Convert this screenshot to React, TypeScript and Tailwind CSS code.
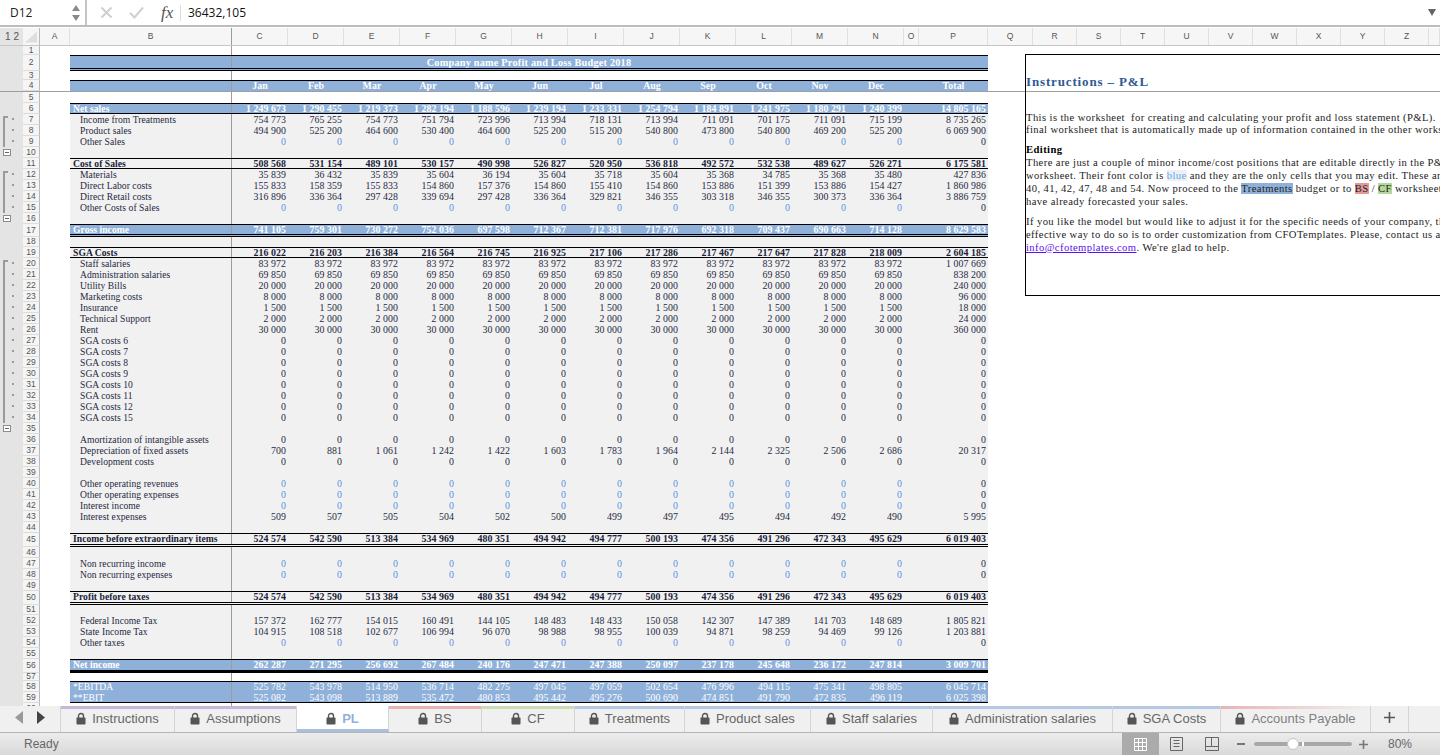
const rep = (v: string, total: string) => [...Array(12).fill(v), total];
const zeros = rep("0", "0");

type Kind = "white" | "grey" | "title" | "head" | "band" | "bandDouble" | "sub" | "subDouble" | "net" | "ebitdaTop" | "ebitdaBottom";

interface RowData {
  n: number;
  h?: string;
  kind: Kind;
  label?: string;
  vals?: string[];
  inputZero?: boolean;
  outline?: "start" | "mid" | "minus";
}

const fillStyles: Record<Kind, string> = {
  white: "bg-white",
  grey: "bg-[#f1f1f1] text-[#1f2942]",
  title: "bg-[#8fb1d9] border-t border-b-[3px] border-t-black border-b-black [border-bottom-style:double] text-white font-bold",
  head: "bg-[#8fb1d9] border-t border-black text-white font-bold",
  band: "bg-[#8fb1d9] border-y border-black text-white font-bold",
  bandDouble: "bg-[#8fb1d9] border-t border-b-[3px] border-t-black border-b-black [border-bottom-style:double] text-white font-bold",
  sub: "bg-[#f1f1f1] border-y border-black text-[#1a2338] font-bold",
  subDouble: "bg-[#f1f1f1] border-t border-b-[3px] border-t-black border-b-black [border-bottom-style:double] text-[#1a2338] font-bold",
  net: "bg-[#8fb1d9] border-t border-b-[3px] border-black text-white font-bold",
  ebitdaTop: "bg-[#8fb1d9] border-t border-black text-white",
  ebitdaBottom: "bg-[#8fb1d9] border-b border-black text-white",
};

const rows: RowData[] = [
  { n: 1, h: "h-[9px]", kind: "white" },
  { n: 2, h: "h-[16px]", kind: "title" },
  { n: 3, h: "h-[9px]", kind: "white" },
  { n: 4, h: "h-[12px]", kind: "head", vals: ["Jan", "Feb", "Mar", "Apr", "May", "Jun", "Jul", "Aug", "Sep", "Oct", "Nov", "Dec", "Total"] },
  { n: 5, kind: "white" },
  { n: 6, kind: "band", label: "Net sales", vals: ["1 249 673", "1 290 455", "1 219 373", "1 282 194", "1 188 596", "1 239 194", "1 233 331", "1 254 794", "1 184 891", "1 241 975", "1 180 291", "1 240 399", "14 805 165"] },
  { n: 7, kind: "grey", outline: "start", label: "Income from Treatments", vals: ["754 773", "765 255", "754 773", "751 794", "723 996", "713 994", "718 131", "713 994", "711 091", "701 175", "711 091", "715 199", "8 735 265"] },
  { n: 8, kind: "grey", outline: "mid", label: "Product sales", vals: ["494 900", "525 200", "464 600", "530 400", "464 600", "525 200", "515 200", "540 800", "473 800", "540 800", "469 200", "525 200", "6 069 900"] },
  { n: 9, kind: "grey", outline: "mid", label: "Other Sales", vals: zeros, inputZero: true },
  { n: 10, kind: "grey", outline: "minus" },
  { n: 11, kind: "sub", label: "Cost of Sales", vals: ["508 568", "531 154", "489 101", "530 157", "490 998", "526 827", "520 950", "536 818", "492 572", "532 538", "489 627", "526 271", "6 175 581"] },
  { n: 12, kind: "grey", outline: "start", label: "Materials", vals: ["35 839", "36 432", "35 839", "35 604", "36 194", "35 604", "35 718", "35 604", "35 368", "34 785", "35 368", "35 480", "427 836"] },
  { n: 13, kind: "grey", outline: "mid", label: "Direct Labor costs", vals: ["155 833", "158 359", "155 833", "154 860", "157 376", "154 860", "155 410", "154 860", "153 886", "151 399", "153 886", "154 427", "1 860 986"] },
  { n: 14, kind: "grey", outline: "mid", label: "Direct Retail costs", vals: ["316 896", "336 364", "297 428", "339 694", "297 428", "336 364", "329 821", "346 355", "303 318", "346 355", "300 373", "336 364", "3 886 759"] },
  { n: 15, kind: "grey", outline: "mid", label: "Other Costs of Sales", vals: zeros, inputZero: true },
  { n: 16, kind: "grey", outline: "minus" },
  { n: 17, h: "h-[13px]", kind: "bandDouble", label: "Gross income", vals: ["741 105", "759 301", "730 272", "752 036", "697 598", "712 367", "712 381", "717 976", "692 318", "709 437", "690 663", "714 128", "8 629 583"] },
  { n: 18, h: "h-[10px]", kind: "grey" },
  { n: 19, kind: "sub", label: "SGA Costs", vals: ["216 022", "216 203", "216 384", "216 564", "216 745", "216 925", "217 106", "217 286", "217 467", "217 647", "217 828", "218 009", "2 604 185"] },
  { n: 20, kind: "grey", outline: "start", label: "Staff salaries", vals: rep("83 972", "1 007 669") },
  { n: 21, kind: "grey", outline: "mid", label: "Administration salaries", vals: rep("69 850", "838 200") },
  { n: 22, kind: "grey", outline: "mid", label: "Utility Bills", vals: rep("20 000", "240 000") },
  { n: 23, kind: "grey", outline: "mid", label: "Marketing costs", vals: rep("8 000", "96 000") },
  { n: 24, kind: "grey", outline: "mid", label: "Insurance", vals: rep("1 500", "18 000") },
  { n: 25, kind: "grey", outline: "mid", label: "Technical Support", vals: rep("2 000", "24 000") },
  { n: 26, kind: "grey", outline: "mid", label: "Rent", vals: rep("30 000", "360 000") },
  { n: 27, kind: "grey", outline: "mid", label: "SGA costs 6", vals: zeros },
  { n: 28, kind: "grey", outline: "mid", label: "SGA costs 7", vals: zeros },
  { n: 29, kind: "grey", outline: "mid", label: "SGA costs 8", vals: zeros },
  { n: 30, kind: "grey", outline: "mid", label: "SGA costs 9", vals: zeros },
  { n: 31, kind: "grey", outline: "mid", label: "SGA costs 10", vals: zeros },
  { n: 32, kind: "grey", outline: "mid", label: "SGA costs 11", vals: zeros },
  { n: 33, kind: "grey", outline: "mid", label: "SGA costs 12", vals: zeros },
  { n: 34, kind: "grey", outline: "mid", label: "SGA costs 15", vals: zeros },
  { n: 35, kind: "grey", outline: "minus" },
  { n: 36, kind: "grey", label: "Amortization of intangible assets", vals: zeros },
  { n: 37, kind: "grey", label: "Depreciation of fixed assets", vals: ["700", "881", "1 061", "1 242", "1 422", "1 603", "1 783", "1 964", "2 144", "2 325", "2 506", "2 686", "20 317"] },
  { n: 38, kind: "grey", label: "Development costs", vals: zeros },
  { n: 39, kind: "grey" },
  { n: 40, kind: "grey", label: "Other operating revenues", vals: zeros, inputZero: true },
  { n: 41, kind: "grey", label: "Other operating expenses", vals: zeros, inputZero: true },
  { n: 42, kind: "grey", label: "Interest income", vals: zeros, inputZero: true },
  { n: 43, kind: "grey", label: "Interest expenses", vals: ["509", "507", "505", "504", "502", "500", "499", "497", "495", "494", "492", "490", "5 995"] },
  { n: 44, kind: "grey" },
  { n: 45, h: "h-[14px]", kind: "subDouble", label: "Income before extraordinary items", vals: ["524 574", "542 590", "513 384", "534 969", "480 351", "494 942", "494 777", "500 193", "474 356", "491 296", "472 343", "495 629", "6 019 403"] },
  { n: 46, kind: "grey" },
  { n: 47, kind: "grey", label: "Non recurring income", vals: zeros, inputZero: true },
  { n: 48, kind: "grey", label: "Non recurring expenses", vals: zeros, inputZero: true },
  { n: 49, kind: "grey" },
  { n: 50, h: "h-[14px]", kind: "subDouble", label: "Profit before taxes", vals: ["524 574", "542 590", "513 384", "534 969", "480 351", "494 942", "494 777", "500 193", "474 356", "491 296", "472 343", "495 629", "6 019 403"] },
  { n: 51, h: "h-[10px]", kind: "grey" },
  { n: 52, kind: "grey", label: "Federal Income Tax", vals: ["157 372", "162 777", "154 015", "160 491", "144 105", "148 483", "148 433", "150 058", "142 307", "147 389", "141 703", "148 689", "1 805 821"] },
  { n: 53, kind: "grey", label: "State Income Tax", vals: ["104 915", "108 518", "102 677", "106 994", "96 070", "98 988", "98 955", "100 039", "94 871", "98 259", "94 469", "99 126", "1 203 881"] },
  { n: 54, kind: "grey", label: "Other taxes", vals: zeros, inputZero: true },
  { n: 55, kind: "grey" },
  { n: 56, h: "h-[14px]", kind: "net", label: "Net income", vals: ["262 287", "271 295", "256 692", "267 484", "240 176", "247 471", "247 388", "250 097", "237 178", "245 648", "236 172", "247 814", "3 009 701"] },
  { n: 57, h: "h-[8px]", kind: "white" },
  { n: 58, kind: "ebitdaTop", label: "*EBITDA", vals: ["525 782", "543 978", "514 950", "536 714", "482 275", "497 045", "497 059", "502 654", "476 996", "494 115", "475 341", "498 805", "6 045 714"] },
  { n: 59, kind: "ebitdaBottom", label: "**EBIT", vals: ["525 082", "543 098", "513 889", "535 472", "480 853", "495 442", "495 276", "500 690", "474 851", "491 790", "472 835", "496 119", "6 025 398"] },
  { n: 60, kind: "white" },
];

const sheetFont = "font-['Liberation_Serif',serif] text-[9.9px] leading-[10px] tracking-[0.05px]";

function Outline({ type }: { type?: RowData["outline"] }) {
  return (
    <div className="w-[23px] shrink-0 bg-[#e4e4e4] flex items-stretch">
      {type === "minus" ? (
        <div className="ml-[3px] mt-[2px] w-[8px] h-[7px] border border-[#8c8c8c] bg-white flex items-center justify-center">
          <div className="w-[4px] h-px bg-[#666]" />
        </div>
      ) : type ? (
        <>
          <div className={"ml-[3px] w-[5px] border-l-2 border-[#9a9a9a] " + (type === "start" ? "border-t-2 mt-[2px]" : "")} />
          <div className="ml-[4px] mt-[4px] w-[2px] h-[2px] bg-[#9a9a9a]" />
        </>
      ) : null}
    </div>
  );
}

function SheetRow({ row }: { row: RowData }) {
  const indent = row.kind === "grey" ? "pl-[10px]" : "pl-[3px]";
  const isHead = row.kind === "head";
  // rows without a top border sit 1px lower so every baseline lands at the same spot
  const pad = row.kind === "grey" || row.kind === "ebitdaBottom" ? "pt-px " : "";
  return (
    <div className={"flex " + (row.h || "h-[11px]") + (isHead ? " border-b border-[#9e9e9e]" : "")}>
      <Outline type={row.outline} />
      <div className="w-[17px] shrink-0 bg-[#f5f5f5] border-r border-b border-r-[#b9b9b9] border-b-[#dcdcdc] flex items-center justify-center font-['Liberation_Sans',sans-serif] text-[8.5px] text-[#555]">
        {row.n}
      </div>
      <div className="w-[30px] shrink-0" />
      <div className={"w-[918px] shrink-0 flex " + fillStyles[row.kind] + " " + sheetFont}>
        <div className={"w-[162px] shrink-0 whitespace-nowrap text-[9.6px] border-r border-[#9c9c9c] " + pad + indent}>{row.label}</div>
        {row.kind === "title" ? (
          <div className="flex-1 pt-px pr-[162px] text-center text-[10.3px] leading-[12px] tracking-[0.2px]">Company name Profit and Loss Budget 2018</div>
        ) : (
          <>
            {(row.vals || []).slice(0, 12).map((v, i) => (
              <div
                key={i}
                className={"w-[56px] shrink-0 whitespace-nowrap " + pad + (isHead ? "text-center " : "text-right pr-[2px] ") + (row.inputZero ? "text-[#5a92e0]" : "")}
              >
                {v}
              </div>
            ))}
            {row.vals && <div className="w-[15px] shrink-0" />}
            {row.vals && (
              <div className={"w-[69px] shrink-0 whitespace-nowrap " + pad + (isHead ? "text-center" : "text-right pr-[2px]")}>{row.vals[12]}</div>
            )}
          </>
        )}
      </div>
    </div>
  );
}

function FormulaBar() {
  return (
    <div className="h-[28px] shrink-0 bg-white">
      <div className="h-[25px] flex items-center">
        <div className="w-[70px] pl-[10px] font-['Open_Sans',sans-serif] text-[12px] text-[#222]">D12</div>
        <svg width="10" height="18" viewBox="0 0 10 18" className="ml-[1px]">
          <path d="M5 1 L9 7 H1 Z" fill="#8a8a8a" />
          <path d="M5 17 L9 11 H1 Z" fill="#8a8a8a" />
        </svg>
        <div className="ml-[4px] h-[25px] w-[2px] bg-[#c4c4c4]" />
        <svg width="13" height="13" viewBox="0 0 13 13" className="ml-[13px]">
          <path d="M1.5 1.5 L11.5 11.5 M11.5 1.5 L1.5 11.5" stroke="#cfcfcf" strokeWidth="2" />
        </svg>
        <svg width="15" height="13" viewBox="0 0 15 13" className="ml-[16px]">
          <path d="M1 7 L5.5 11.5 L14 1.5" stroke="#cfcfcf" strokeWidth="2" fill="none" />
        </svg>
        <span className="ml-[17px] w-[19px] font-['Liberation_Serif',serif] italic text-[17px] text-[#555]">fx</span>
        <div className="h-[16px] w-px bg-[#ddd]" />
        <span className="ml-[7px] font-['Open_Sans',sans-serif] text-[12px] text-[#111]">36432,105</span>
        <svg width="8" height="7" viewBox="0 0 8 7" className="ml-auto mr-[4px]">
          <path d="M0 0 H8 L4 7 Z" fill="#666" />
        </svg>
      </div>
      <div className="h-[2px] bg-[#bdbdbd]" />
    </div>
  );
}

const colHeads: [string, string][] = [
  ["A", "w-[30px]"], ["B", "w-[162px]"], ["C", "w-[56px]"], ["D", "w-[56px]"], ["E", "w-[56px]"], ["F", "w-[56px]"],
  ["G", "w-[56px]"], ["H", "w-[56px]"], ["I", "w-[56px]"], ["J", "w-[56px]"], ["K", "w-[56px]"], ["L", "w-[56px]"],
  ["M", "w-[56px]"], ["N", "w-[56px]"], ["O", "w-[15px]"], ["P", "w-[69px]"], ["Q", "w-[45px]"], ["R", "w-[44px]"],
  ["S", "w-[44px]"], ["T", "w-[44px]"], ["U", "w-[44px]"], ["V", "w-[44px]"], ["W", "w-[44px]"], ["X", "w-[44px]"],
  ["Y", "w-[44px]"], ["Z", "w-[44px]"], ["", "w-[11px]"],
];

function ColumnHeader() {
  return (
    <div className="h-[18px] shrink-0 flex bg-[#f6f6f6] border-b border-[#c6c6c6]">
      <div className="w-[23px] shrink-0 bg-[#e4e4e4] flex items-center pl-[5px] gap-[3px] font-['Liberation_Sans',sans-serif] text-[10px] text-[#555]">
        <span>1</span>
        <span>2</span>
      </div>
      <div className="w-[17px] shrink-0 border-r border-[#b9b9b9] flex items-end justify-end p-[2px]">
        <svg width="13" height="12" viewBox="0 0 13 12">
          <path d="M13 0 V12 H0 Z" fill="#dedede" />
        </svg>
      </div>
      {colHeads.map(([c, w], i) => (
        <div
          key={i}
          className={w + " shrink-0 flex items-center justify-center border-r font-['Liberation_Sans',sans-serif] text-[8.5px] text-[#555] " + (c === "B" ? "border-[#9c9c9c]" : "border-[#e0e0e0]")}
        >
          {c}
        </div>
      ))}
    </div>
  );
}

function InstructionsBox() {
  return (
    <div className="absolute left-[1025px] top-[8px] h-[242px] w-[415px] border border-r-0 border-black bg-white overflow-hidden whitespace-nowrap font-['Liberation_Serif',serif] text-[10.6px] leading-[12.9px] tracking-[0.41px] text-[#222]">
      <div className="absolute left-0 right-0 top-[36px] h-px bg-[#9e9e9e]" />
      <div className="mt-[19px] font-bold text-[13px] leading-[16px] tracking-[0.85px] text-[#2f5a96]">Instructions – P&amp;L</div>
      <div className="mt-[21.5px]">This is the worksheet&nbsp; for creating and calculating your profit and loss statement (P&amp;L).</div>
      <div>final worksheet that is automatically made up of information contained in the other worksheets.</div>
      <div className="mt-[7px] font-bold text-black">Editing</div>
      <div>There are just a couple of minor income/cost positions that are editable directly in the P&amp;L</div>
      <div>
        worksheet. Their font color is <span className="bg-[#edf1f7] text-[#6b9fe3]">blue</span> and they are the only cells that you may edit. These are
      </div>
      <div>
        40, 41, 42, 47, 48 and 54. Now proceed to the <span className="bg-[#8fb1d9]">Treatments</span> budget or to <span className="bg-[#e59a9a]">BS</span> / <span className="bg-[#b5d89a]">CF</span> worksheets
      </div>
      <div>have already forecasted your sales.</div>
      <div className="mt-[7px]">If you like the model but would like to adjust it for the specific needs of your company, the most</div>
      <div>effective way to do so is to order customization from CFOTemplates. Please, contact us at</div>
      <div>
        <span className="underline text-[#5a10f0]">info@cfotemplates.com</span>. We're glad to help.
      </div>
    </div>
  );
}

function LockIcon({ color = "#555" }: { color?: string }) {
  return (
    <svg width="10" height="13" viewBox="0 0 10 13">
      <path d="M2.5 6 V4 a2.5 2.5 0 0 1 5 0 V6" fill="none" stroke={color} strokeWidth="1.4" />
      <rect x="0.5" y="5.5" width="9" height="7" rx="0.8" fill={color} />
    </svg>
  );
}

const tabs = [
  { name: "Instructions", w: "w-[114px]", strip: "bg-[#c8b7d8]" },
  { name: "Assumptions", w: "w-[122px]", strip: "bg-[#c8b7d8]" },
  { name: "PL", w: "w-[92px]", strip: "bg-white", active: true },
  { name: "BS", w: "w-[93px]", strip: "bg-[#e8b4b4]" },
  { name: "CF", w: "w-[93px]", strip: "bg-[#c9deb4]" },
  { name: "Treatments", w: "w-[110px]", strip: "bg-[#b5c8e2]" },
  { name: "Product sales", w: "w-[126px]", strip: "bg-[#b5c8e2]" },
  { name: "Staff salaries", w: "w-[122px]", strip: "bg-[#b5c8e2]" },
  { name: "Administration salaries", w: "w-[180px]", strip: "bg-[#b5c8e2]" },
  { name: "SGA Costs", w: "w-[108px]", strip: "bg-[#b5c8e2]" },
  { name: "Accounts Payable", w: "w-[150px]", strip: "bg-gradient-to-r from-[#e8b4b4] to-[#f0f0f0]", fade: true },
];

function TabBar() {
  return (
    <div className="h-[27px] shrink-0 flex bg-[#f0f0f0] border-b border-[#b4b4b4] font-['Liberation_Sans',sans-serif] text-[13px] text-[#666]">
      <div className="w-[61px] shrink-0 flex items-center pb-[3px] pl-[15px] gap-[14px] border-r border-[#d4d4d4]">
        <svg width="8" height="13" viewBox="0 0 8 13"><path d="M8 0 V13 L0 6.5 Z" fill="#9a9a9a" /></svg>
        <svg width="8" height="13" viewBox="0 0 8 13"><path d="M0 0 V13 L8 6.5 Z" fill="#444" /></svg>
      </div>
      {tabs.map((t) => (
        <div key={t.name} className={t.w + " shrink-0 flex flex-col border-r border-[#d4d4d4] " + (t.active ? "bg-white border-b-[3px] border-b-[#a9c0de]" : "")}>
          <div className={"h-[3px] shrink-0 " + t.strip} />
          <div className={"flex-1 flex items-center justify-center gap-[6px] " + (t.active ? "pb-[2px] text-[#8fb1d9] font-bold" : "pb-[5px]") + (t.fade ? " text-[#808080]" : "")}>
            <LockIcon />
            <span>{t.name}</span>
          </div>
        </div>
      ))}
      <div className="w-[38px] shrink-0 flex items-center justify-center pb-[3px] border-r border-[#d4d4d4] text-[#555]">
        <svg width="11" height="11" viewBox="0 0 11 11"><path d="M5.5 0 V11 M0 5.5 H11" stroke="#555" strokeWidth="1.6" /></svg>
      </div>
    </div>
  );
}

function StatusBar() {
  return (
    <div className="h-[22px] shrink-0 flex items-center bg-gradient-to-b from-[#ececec] to-[#d9d9d9] font-['Liberation_Sans',sans-serif] text-[12px] text-[#666]">
      <span className="ml-[24px]">Ready</span>
      <div className="ml-auto h-full w-[37px] bg-[#ababab] flex items-center justify-center">
        <svg width="13" height="13" viewBox="0 0 13 13">
          <path d="M0.5 0.5 H12.5 V12.5 H0.5 Z M4.5 0.5 V12.5 M8.5 0.5 V12.5 M0.5 4.5 H12.5 M0.5 8.5 H12.5" fill="none" stroke="#fff" />
        </svg>
      </div>
      <svg width="13" height="14" viewBox="0 0 13 14" className="ml-[11px]">
        <path d="M0.5 0.5 H12.5 V13.5 H0.5 Z M3.5 3.5 H9.5 M3.5 6.5 H9.5 M3.5 9.5 H9.5" fill="none" stroke="#666" />
      </svg>
      <svg width="14" height="14" viewBox="0 0 14 14" className="ml-[22px]">
        <path d="M0.5 0.5 H13.5 V13.5 H0.5 Z M0.5 9.5 H6.5 V0.5 M6.5 9.5 H13.5" fill="none" stroke="#666" />
      </svg>
      <div className="ml-[18px] w-[8px] h-[2px] bg-[#777]" />
      <div className="relative ml-[9px] w-[98px] h-[4px] rounded-full bg-[#a8a8a8]">
        <div className="absolute left-[48px] top-0 w-[2px] h-[4px] bg-white" />
        <div className="absolute left-[33px] top-[-4px] w-[12px] h-[12px] rounded-full bg-white border border-[#c4c4c4]" />
      </div>
      <svg width="9" height="9" viewBox="0 0 9 9" className="ml-[7px]"><path d="M4.5 0 V9 M0 4.5 H9" stroke="#777" strokeWidth="1.6" /></svg>
      <span className="ml-[20px] mr-[27px] w-[25px]">80%</span>
    </div>
  );
}

export default function App() {
  return (
    <div className="w-[1440px] h-[755px] overflow-hidden flex flex-col bg-white">
      <FormulaBar />
      <ColumnHeader />
      <div className="relative h-[660px] shrink-0 overflow-hidden">
        {rows.map((r) => (
          <SheetRow key={r.n} row={r} />
        ))}
        <InstructionsBox />
      </div>
      <TabBar />
      <StatusBar />
    </div>
  );
}
